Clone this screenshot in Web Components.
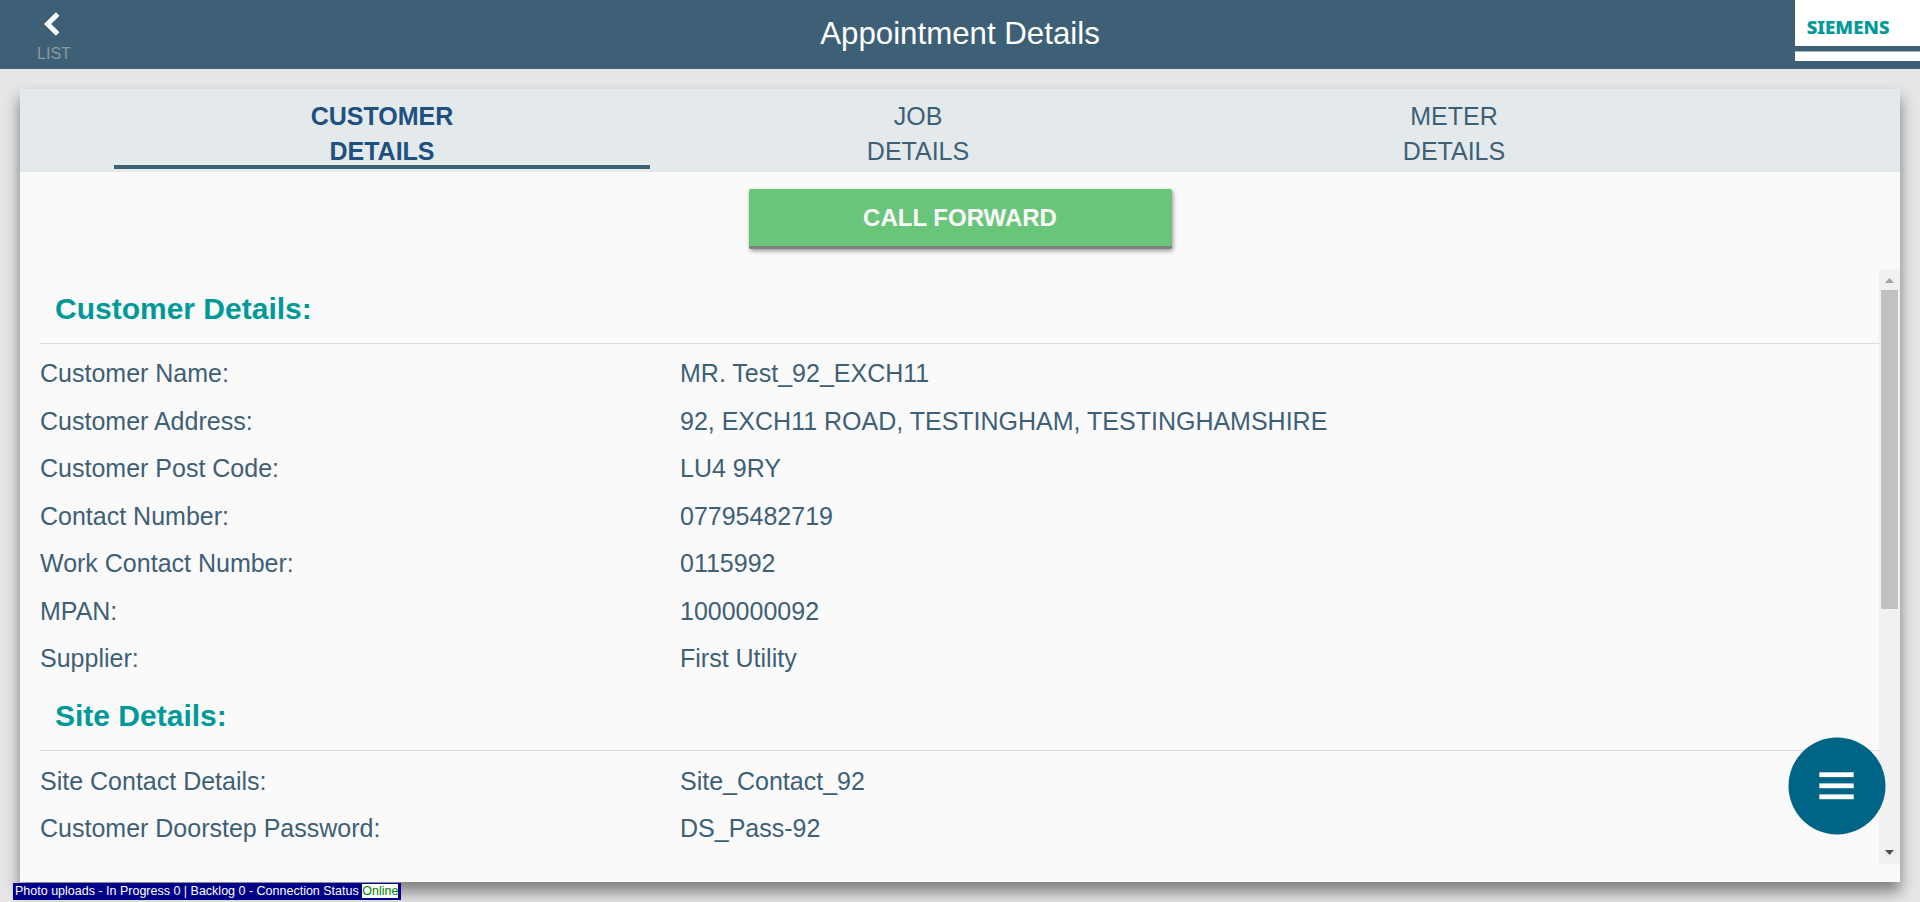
<!DOCTYPE html>
<html lang="en">
<head>
<meta charset="utf-8">
<title>Appointment Details</title>
<style>
html, body { margin: 0; height: 100%; overflow: hidden; background: #e6e6e6; }
body { font: 25px/35px "Liberation Sans", Arial, sans-serif; color: #3e6076; }
</style>
</head>
<body>
<appointment-page></appointment-page>
<script>
const define = (name, html) => {
  const t = document.createElement('template');
  t.innerHTML = html;
  customElements.define(name, class extends HTMLElement {
    constructor() {
      super();
      this.attachShadow({ mode: 'open' }).appendChild(t.content.cloneNode(true));
    }
  });
};

define('brand-logo', `
<style>
:host { display: block; width: 125px; height: 61px; }
svg { display: block; }
</style>
<svg width="125" height="61" viewBox="0 0 125 61">
  <rect width="125" height="61" fill="#fff"/>
  <rect y="46" width="125" height="6" fill="#3e6076"/>
  <rect y="51" width="125" height="1" fill="#a3b4bf"/>
  <text x="11.8" y="33.6" font-family="Noto Sans, Open Sans, sans-serif" font-weight="800" font-size="18" textLength="82.6" lengthAdjust="spacingAndGlyphs" fill="#009999" stroke="#009999" stroke-width="0.2">SIEMENS</text>
</svg>`);

define('back-button', `
<style>
:host { display: flex; flex-direction: column; align-items: center; width: 108px; font-size: 16px; line-height: 20px; color: #8b9a9b; }
svg { display: block; margin: 12px 4px 8px 0; }
</style>
<svg width="18" height="24" viewBox="0 0 18 24"><path d="M14.7 2 L4.6 12 L14.7 22" fill="none" stroke="#fff" stroke-width="5"/></svg>
<span><slot></slot></span>`);

define('app-header', `
<style>
:host { display: grid; grid-template-columns: 1fr auto 1fr; height: 69px; background: #3e6076; color: #fff; }
h1 { margin: 0; font-size: 31.25px; font-weight: 400; line-height: 68px; }
brand-logo { justify-self: end; }
</style>
<back-button>LIST</back-button>
<h1><slot></slot></h1>
<brand-logo></brand-logo>`);

define('tab-item', `
<style>
:host { display: block; box-sizing: border-box; width: 536px; height: 80px; padding-top: 10px; border-bottom: 4px solid transparent; text-align: center; }
:host([active]) { font-weight: 700; color: #20507f; border-color: #3e6076; }
</style>
<slot></slot>`);

define('tab-bar', `
<style>
:host { display: flex; height: 83px; padding-left: 94px; background: #e4eaec; }
</style>
<slot></slot>`);

define('action-button', `
<style>
:host { display: block; box-sizing: border-box; width: 423px; height: 60px; margin: 17px auto 20px; border-radius: 2px; border-bottom: 3px solid #7f7f7f; background: #69c57a; box-shadow: 1px 2px 4px rgba(0,0,0,.4); color: #fafafa; font-size: 24px; font-weight: 700; line-height: 57px; text-align: center; }
</style>
<slot></slot>`);

define('detail-row', `
<style>
:host { display: grid; grid-template-columns: 640px 1fr; height: 47.55px; }
</style>
<span><slot name="label"></slot></span><span><slot></slot></span>`);

define('detail-section', `
<style>
:host { display: block; }
h2 { margin: 0; height: 74px; padding-left: 15px; box-sizing: border-box; padding-top: 19px; font-size: 30px; line-height: 40px; color: #009999; border-bottom: 1px solid #dcdcdc; }
.rows { padding-top: var(--rows-gap, 12px); margin-bottom: -12px; }
</style>
<h2><slot name="heading"></slot></h2>
<div class="rows"><slot></slot></div>`);

define('scroll-bar', `
<style>
:host { display: flex; flex-direction: column; width: 21px; height: 595px; background: #f1f1f1; }
.thumb { width: 17px; height: 319px; margin: 0 2px auto; background: #c1c1c1; }
svg { display: block; }
</style>
<svg width="21" height="21"><path d="M6 14 L10.5 9 L15 14Z" fill="#a3a3a3"/></svg>
<div class="thumb"></div>
<svg width="21" height="21"><path d="M6 7 L10.5 12 L15 7Z" fill="#505050"/></svg>`);

define('menu-fab', `
<style>
:host { display: block; position: absolute; left: 1788px; top: 737px; }
svg { display: block; }
</style>
<svg width="98" height="98" viewBox="0 0 98 98">
  <circle cx="49" cy="49" r="48.5" fill="#006487"/>
  <g fill="#fff"><rect x="31.3" y="35.3" width="34.4" height="4.8"/><rect x="31.3" y="46.4" width="34.4" height="4.8"/><rect x="31.3" y="57.4" width="34.4" height="4.8"/></g>
</svg>`);

define('upload-status', `
<style>
:host { display: block; position: absolute; left: 13px; top: 883px; box-sizing: border-box; height: 17px; padding: 1px 3px 0 2px; background: #00008b; color: #fff; font-size: 12.5px; line-height: 14px; white-space: nowrap; }
b { display: inline-block; font-weight: 400; background: #fff; color: #008000; }
</style>
<slot></slot> <b><slot name="state"></slot></b>`);

define('detail-card', `
<style>
:host { display: block; height: 793px; margin: 20px 20px 0; background: #fafafa; box-shadow: 0 10px 13px 0 rgba(0,0,0,.3), 0 9px 16px 0 rgba(0,0,0,.2); }
.body { display: grid; grid-template-columns: 1fr 21px; height: 595px; }
.scroll { padding: 1px 0 0 20px; height: 594px; overflow: hidden; }
</style>
<slot name="tabs"></slot>
<slot name="action"></slot>
<div class="body"><div class="scroll"><slot></slot></div><scroll-bar></scroll-bar></div>`);

const row = (label, value) => `<detail-row><span slot="label">${label}</span>${value}</detail-row>`;

define('appointment-page', `
<style>
:host { display: block; position: relative; height: 902px; overflow: hidden; }
.site { --rows-gap: 13px; }
</style>
<app-header>Appointment Details</app-header>
<detail-card>
  <tab-bar slot="tabs"><tab-item active>CUSTOMER<br>DETAILS</tab-item><tab-item>JOB<br>DETAILS</tab-item><tab-item>METER<br>DETAILS</tab-item></tab-bar>
  <action-button slot="action">CALL FORWARD</action-button>
  <detail-section><span slot="heading">Customer Details:</span>
    ${row('Customer Name:', 'MR. Test_92_EXCH11')}
    ${row('Customer Address:', '92, EXCH11 ROAD, TESTINGHAM, TESTINGHAMSHIRE')}
    ${row('Customer Post Code:', 'LU4 9RY')}
    ${row('Contact Number:', '07795482719')}
    ${row('Work Contact Number:', '0115992')}
    ${row('MPAN:', '1000000092')}
    ${row('Supplier:', 'First Utility')}
  </detail-section>
  <detail-section class="site"><span slot="heading">Site Details:</span>
    ${row('Site Contact Details:', 'Site_Contact_92')}
    ${row('Customer Doorstep Password:', 'DS_Pass-92')}
  </detail-section>
</detail-card>
<menu-fab></menu-fab>
<upload-status>Photo uploads - In Progress 0 | Backlog 0 - Connection Status<span slot="state">Online</span></upload-status>`);
</script>
</body>
</html>
